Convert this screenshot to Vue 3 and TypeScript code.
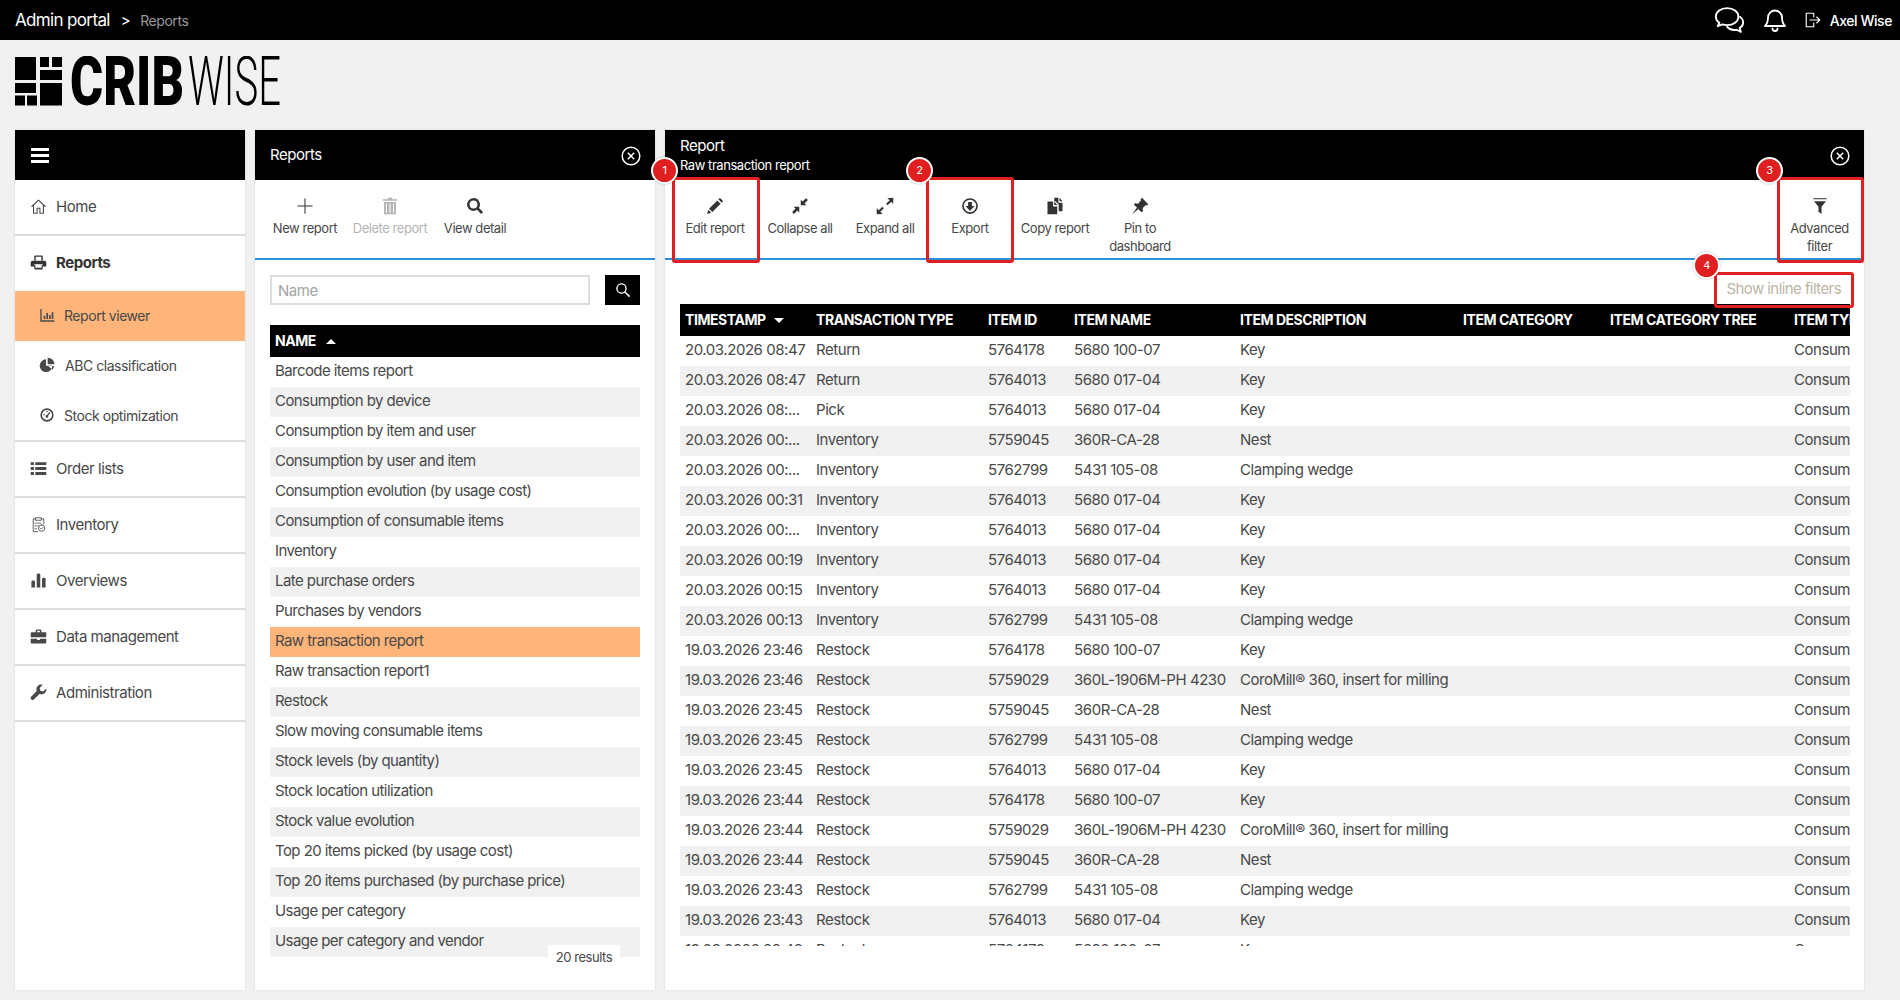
<script lang="ts" setup>
interface Icon { d: string; stroke?: boolean; sw?: number }

const ic: Record<string, Icon> = {
  home: { d: 'M2.5 12 12 3l9.5 9M5 10v11.5h5v-7h4v7h5V10', stroke: true, sw: 1.5 },
  print: { d: 'M6 9V3.5A1.5 1.5 0 0 1 7.5 2h9A1.5 1.5 0 0 1 18 3.5V9h-2V4H8v5zM3.5 9.5h17A2.5 2.5 0 0 1 23 12v5.5h-5V14H6v3.5H1V12a2.5 2.5 0 0 1 2.5-2.5zM7.5 15.5h9v4h-9zM6 15v5.5A1.5 1.5 0 0 0 7.5 22h9a1.5 1.5 0 0 0 1.5-1.5V15z' },
  chart: { d: 'M2 3h2v17h19v2H2zM7 13h2.5v5H7zM11 9h2.5v9H11zM15 12h2.5v6H15zM19 8h2.5v10H19z' },
  pie: { d: 'M10.5 3.5a9.5 9.5 0 1 0 9.5 9.5h-9.5zM13 1a10 10 0 0 1 10 10H13zM14 13.5h8.5a9 9 0 0 1-2.5 5.5z' },
  gauge: { d: 'M12 2a10 10 0 1 0 0 20 10 10 0 0 0 0-20zm0 2.4a7.6 7.6 0 1 1 0 15.2 7.6 7.6 0 0 1 0-15.2zM11 6h2v2h-2zM6.5 10.5h2v2h-2zM15.5 7.5l1.6 1.2-3.4 4.6a2 2 0 1 1-1.7-1.2z' },
  list: { d: 'M1 3h4.5v4H1zM7.5 3H23v4H7.5zM1 10h4.5v4H1zM7.5 10H23v4H7.5zM1 17h4.5v4H1zM7.5 17H23v4H7.5z' },
  clip: { d: 'M8 4H4.5v18H11M16 4h3.5v7M8 2.5h8v3.5H8zM7 10h2M11 10h4M7 14h2M7 18h2M11 14h1M16.5 12.5a4.5 4.5 0 1 0 0 9 4.5 4.5 0 0 0 0-9zM14.5 17l1.5 1.5 2.5-2.5', stroke: true, sw: 1.2 },
  bars: { d: 'M2 14a2 2 0 0 1 2-2h1a2 2 0 0 1 2 2v8H2zM9.5 4a2 2 0 0 1 2-2h1a2 2 0 0 1 2 2v18h-5zM17 10a2 2 0 0 1 2-2h1a2 2 0 0 1 2 2v12h-5z' },
  case: { d: 'M8 6V3.5A1.5 1.5 0 0 1 9.5 2h5A1.5 1.5 0 0 1 16 3.5V6h5.5A1.5 1.5 0 0 1 23 7.5V13H1V7.5A1.5 1.5 0 0 1 2.5 6zM10 4v2h4V4zM1 15h9v2h4v-2h9v5.5a1.5 1.5 0 0 1-1.5 1.5h-19A1.5 1.5 0 0 1 1 20.5z' },
  wrench: { d: 'M23 6.5l-4.4 4.2-4-1-1.1-4L18 1.2a6.5 6.5 0 0 0-8.4 8.6L1.5 18a2.7 2.7 0 0 0 3.8 3.8l8.5-8a6.5 6.5 0 0 0 9.2-7.3z' },
  pencil: { d: 'M15 4.5l4.5 4.5L8.5 20 4 15.5zM3 17l4 4-5.5 1.5zM16.5 3l1-1a1.5 1.5 0 0 1 2 0L22 4.500a1.500 1.500 0 0 1 0 2l-1 1z' },
  compress: { d: 'M13 11V3.5L15.5 6 20 1.5 22.500 4 18 8.500l2.500 2.500zM11 13v7.500L8.500 18 4 22.500 1.500 20 6 15.500 3.500 13z' },
  expand: { d: 'M23 1v8l-2.700-2.700-4.800 4.800-2-2 4.800-4.800L15 1.500zM1 23v-8l2.700 2.700 4.800-4.800 2 2-4.800 4.800L9 22.500z' },
  download: { d: 'M12 1.500a10.500 10.500 0 1 0 0 21 10.500 10.500 0 0 0 0-21zm0 2.200a8.300 8.300 0 1 1 0 16.600 8.300 8.300 0 0 1 0-16.600zM9.500 6.500h5V12h3.500L12 18.500 6 12h3.500z' },
  copy: { d: 'M2 6h7.500v6.500H15V23H2zM11 6l4 4.500h-4zM11 1h5.500v6.500H22V19h-5v-9l-4.500-4.500H11zM18 1l4 4.500h-4z' },
  pin: { d: 'M14.500 1 23 9.500l-1.700 1.700-1.300-.6-4.500 4 .5 4L14 20.300 3.700 10l1.700-1.600 4 .5 4-4.500-.6-1.300zM8 14l2 2-8.500 7z' },
  funnel: { d: 'M3 1.500h18V3H3zM4 5.500h16L14 13v9.500l-4-3V13z' },
  plus: { d: 'M12 2.500v19M2.500 12h19', stroke: true, sw: 1.4 },
  trash: { d: 'M9 1h6v2h6.500v2h-19V3H9zM4 6.500h16V23H4zM6.500 9v12H8V9zM11.250 9v12h1.500V9zM16 9v12h1.500V9z' },
  search: { d: 'M10 1.500a8.500 8.500 0 1 0 4.800 15.500l5.300 5.500 2.600-2.600-5.400-5.400A8.500 8.500 0 0 0 10 1.500zm0 3.300a5.200 5.200 0 1 1 0 10.400 5.200 5.200 0 0 1 0-10.400z' },
  lens: { d: 'M10 3a7 7 0 1 0 4.200 12.600l5.900 5.900 1.400-1.400-5.900-5.900A7 7 0 0 0 10 3zm0 1.800a5.200 5.200 0 1 1 0 10.400 5.200 5.200 0 0 1 0-10.400z' },
  chat: { d: 'M10.500 2.500C5.500 2.500 1.500 5.500 1.500 9.300c0 2 1 3.700 2.800 5l-1.300 2.700 3.800-1.500c1.200.4 2.400.6 3.700.6 5 0 9-3 9-6.800s-4-6.800-9-6.800zM21 9.500c3.500 3 2.700 7-.5 9l1 3-3.500-1.700c-3 .5-6-.5-7.500-2.300', stroke: true, sw: 1.5 },
  bell: { d: 'M12 2.500a7 7 0 0 0-7 7c0 5-1.500 7-3 8.500h20c-1.500-1.500-3-3.500-3-8.500a7 7 0 0 0-7-7zM9.500 20.500a2.500 2.500 0 0 0 5 0', stroke: true, sw: 1.8 },
  logout: { d: 'M13 3H3v18h10v-5M13 8V3M8 12h13M17 8l4 4-4 4', stroke: true, sw: 1.5 },
};

const navTop = [
  { label: 'Home', icon: 'home' },
];
const navSub = [
  { label: 'Report viewer', icon: 'chart', active: true },
  { label: 'ABC classification', icon: 'pie', wide: true },
  { label: 'Stock optimization', icon: 'gauge' },
];
const navBottom = [
  { label: 'Order lists', icon: 'list' },
  { label: 'Inventory', icon: 'clip' },
  { label: 'Overviews', icon: 'bars' },
  { label: 'Data management', icon: 'case' },
  { label: 'Administration', icon: 'wrench' },
];

const reportTools = [
  { label: 'New report', icon: 'plus' },
  { label: 'Delete report', icon: 'trash', off: true },
  { label: 'View detail', icon: 'search' },
];
const viewTools = [
  { label: 'Edit report', icon: 'pencil' },
  { label: 'Collapse all', icon: 'compress' },
  { label: 'Expand all', icon: 'expand' },
  { label: 'Export', icon: 'download' },
  { label: 'Copy report', icon: 'copy' },
  { label: 'Pin to dashboard', icon: 'pin' },
];

const reports = [
  'Barcode items report', 'Consumption by device', 'Consumption by item and user',
  'Consumption by user and item', 'Consumption evolution (by usage cost)',
  'Consumption of consumable items', 'Inventory', 'Late purchase orders',
  'Purchases by vendors', 'Raw transaction report', 'Raw transaction report1', 'Restock',
  'Slow moving consumable items', 'Stock levels (by quantity)', 'Stock location utilization',
  'Stock value evolution', 'Top 20 items picked (by usage cost)',
  'Top 20 items purchased (by purchase price)', 'Usage per category',
  'Usage per category and vendor',
];

const columns = [
  { name: 'TIMESTAMP', width: 131 },
  { name: 'TRANSACTION TYPE', width: 172 },
  { name: 'ITEM ID', width: 86 },
  { name: 'ITEM NAME', width: 166 },
  { name: 'ITEM DESCRIPTION', width: 223 },
  { name: 'ITEM CATEGORY', width: 147 },
  { name: 'ITEM CATEGORY TREE', width: 184 },
  { name: 'ITEM TYPE', width: 160 },
];

const items: Record<string, [string, string, string]> = {
  a: ['5764178', '5680 100-07', 'Key'],
  b: ['5764013', '5680 017-04', 'Key'],
  c: ['5759045', '360R-CA-28', 'Nest'],
  d: ['5762799', '5431 105-08', 'Clamping wedge'],
  e: ['5759029', '360L-1906M-PH 4230', 'CoroMill® 360, insert for milling'],
};
const rows: [string, string, string][] = [
  ['20.03.2026 08:47', 'Return', 'a'],
  ['20.03.2026 08:47', 'Return', 'b'],
  ['20.03.2026 08:...', 'Pick', 'b'],
  ['20.03.2026 00:...', 'Inventory', 'c'],
  ['20.03.2026 00:...', 'Inventory', 'd'],
  ['20.03.2026 00:31', 'Inventory', 'b'],
  ['20.03.2026 00:...', 'Inventory', 'b'],
  ['20.03.2026 00:19', 'Inventory', 'b'],
  ['20.03.2026 00:15', 'Inventory', 'b'],
  ['20.03.2026 00:13', 'Inventory', 'd'],
  ['19.03.2026 23:46', 'Restock', 'a'],
  ['19.03.2026 23:46', 'Restock', 'e'],
  ['19.03.2026 23:45', 'Restock', 'c'],
  ['19.03.2026 23:45', 'Restock', 'd'],
  ['19.03.2026 23:45', 'Restock', 'b'],
  ['19.03.2026 23:44', 'Restock', 'a'],
  ['19.03.2026 23:44', 'Restock', 'e'],
  ['19.03.2026 23:44', 'Restock', 'c'],
  ['19.03.2026 23:43', 'Restock', 'd'],
  ['19.03.2026 23:43', 'Restock', 'b'],
  ['19.03.2026 23:43', 'Restock', 'a'],
];
</script>

<template>
  <div class="page">
    <header class="topbar">
      <div class="crumbs">
        <span class="crumb-main">Admin portal</span>
        <span class="crumb-sep">&gt;</span>
        <span class="crumb-sub">Reports</span>
      </div>
      <div class="user">
        <svg class="ic chat" viewBox="0 0 24 24"><path class="line" :style="{ strokeWidth: ic.chat.sw }" :d="ic.chat.d" /></svg>
        <svg class="ic bell" viewBox="0 0 24 24"><path class="line" :style="{ strokeWidth: ic.bell.sw }" :d="ic.bell.d" /></svg>
        <svg class="ic logout" viewBox="0 0 24 24"><path class="line" :style="{ strokeWidth: ic.logout.sw }" :d="ic.logout.d" /></svg>
        <span class="user-name">Axel Wise</span>
      </div>
    </header>

    <div class="brand">
      <svg class="logo" viewBox="0 0 270 50" width="270" height="50">
        <g fill="#000">
          <rect x="0" y="1" width="21" height="23" />
          <rect x="25" y="1" width="9" height="10" />
          <rect x="37" y="1" width="10" height="10" />
          <rect x="25" y="14" width="22" height="10" />
          <rect x="0" y="27" width="21" height="10" />
          <rect x="0" y="39.5" width="10" height="10" />
          <rect x="12" y="39.5" width="10" height="10" />
          <rect x="25" y="27" width="22" height="22.5" />
        </g>
        <text class="logo-a" x="55" y="49" textLength="114" lengthAdjust="spacingAndGlyphs">CRIB</text>
        <text class="logo-b" x="173" y="49" textLength="93" lengthAdjust="spacingAndGlyphs">WISE</text>
      </svg>
    </div>

    <main class="panels">
      <nav class="panel sidebar">
        <div class="side-head">
          <span class="burger"><i /><i /><i /></span>
        </div>
        <a v-for="n in navTop" :key="n.label" class="nav-row">
          <svg class="ic nav-ic" viewBox="0 0 24 24"><path :class="{ line: ic[n.icon].stroke }" :style="{ strokeWidth: ic[n.icon].sw }" :d="ic[n.icon].d" /></svg>
          {{ n.label }}
        </a>
        <a class="nav-row nav-open">
          <svg class="ic nav-ic" viewBox="0 0 24 24"><path :d="ic.print.d" /></svg>
          Reports
        </a>
        <a v-for="n in navSub" :key="n.label" class="nav-sub" :class="{ active: n.active, wide: n.wide }">
          <svg class="ic sub-ic" viewBox="0 0 24 24"><path :d="ic[n.icon].d" /></svg>
          {{ n.label }}
        </a>
        <div class="nav-rule" />
        <a v-for="n in navBottom" :key="n.label" class="nav-row">
          <svg class="ic nav-ic" viewBox="0 0 24 24"><path :class="{ line: ic[n.icon].stroke }" :style="{ strokeWidth: ic[n.icon].sw }" :d="ic[n.icon].d" /></svg>
          {{ n.label }}
        </a>
      </nav>

      <section class="panel">
        <div class="panel-head">
          <span class="panel-title">Reports</span>
          <svg class="close" viewBox="0 0 20 20"><circle cx="10" cy="10" r="8.8" /><path d="M6.8 6.8l6.4 6.4M13.2 6.8l-6.4 6.4" /></svg>
        </div>
        <div class="toolbar">
          <button v-for="t in reportTools" :key="t.label" class="tool" :class="{ off: t.off }">
            <svg class="ic tool-ic" viewBox="0 0 24 24"><path :class="{ line: ic[t.icon].stroke }" :style="{ strokeWidth: ic[t.icon].sw }" :d="ic[t.icon].d" /></svg>
            <span>{{ t.label }}</span>
          </button>
        </div>
        <div class="list-body">
          <div class="search">
            <input class="search-input" placeholder="Name" />
            <button class="search-btn">
              <svg class="ic lens" viewBox="0 0 24 24"><path :d="ic.lens.d" /></svg>
            </button>
          </div>
          <div class="name-head">NAME <span class="tri-up" /></div>
          <div class="list">
            <div v-for="(r, i) in reports" :key="r" class="list-row" :class="{ striped: i % 2 === 1, selected: r === 'Raw transaction report' }">{{ r }}</div>
            <div class="results">20 results</div>
          </div>
        </div>
      </section>

      <section class="panel report">
        <div class="panel-head">
          <div class="titles">
            <div class="panel-title">Report</div>
            <div class="panel-sub">Raw transaction report</div>
          </div>
          <svg class="close" viewBox="0 0 20 20"><circle cx="10" cy="10" r="8.8" /><path d="M6.8 6.8l6.4 6.4M13.2 6.8l-6.4 6.4" /></svg>
        </div>
        <div class="toolbar">
          <button v-for="t in viewTools" :key="t.label" class="tool">
            <svg class="ic tool-ic" viewBox="0 0 24 24"><path :d="ic[t.icon].d" /></svg>
            <span>{{ t.label }}</span>
          </button>
          <button class="tool tool-end">
            <svg class="ic tool-ic" viewBox="0 0 24 24"><path :d="ic.funnel.d" /></svg>
            <span>Advanced filter</span>
          </button>
        </div>
        <div class="report-body">
          <div class="inline-row"><span class="inline-link">Show inline filters</span></div>
          <div class="table-wrap">
            <table class="grid">
              <colgroup>
                <col v-for="c in columns" :key="c.name" :style="{ width: c.width + 'px' }" />
              </colgroup>
              <thead>
                <tr>
                  <th v-for="(c, i) in columns" :key="c.name">{{ c.name }}<span v-if="i === 0" class="tri-down" /></th>
                </tr>
              </thead>
              <tbody>
                <tr v-for="(r, i) in rows" :key="i" :class="{ striped: i % 2 === 1 }">
                  <td>{{ r[0] }}</td>
                  <td>{{ r[1] }}</td>
                  <td>{{ items[r[2]][0] }}</td>
                  <td>{{ items[r[2]][1] }}</td>
                  <td>{{ items[r[2]][2] }}</td>
                  <td></td>
                  <td></td>
                  <td>Consumable</td>
                </tr>
              </tbody>
            </table>
          </div>
        </div>

        <span class="mark mark-edit" />
        <span class="mark mark-export" />
        <span class="mark mark-filter" />
        <span class="mark mark-inline" />
        <span class="badge badge-1">1</span>
        <span class="badge badge-2">2</span>
        <span class="badge badge-3">3</span>
        <span class="badge badge-4">4</span>
      </section>
    </main>
  </div>
</template>

<style>
html, body {
  margin: 0;
  background: #f1f1f1;
  overflow: hidden;
}
</style>

<style scoped>
.page {
  width: 1900px;
  height: 1000px;
  display: flex;
  flex-direction: column;
  font-family: Inter, "Liberation Sans", sans-serif;
  letter-spacing: -0.45px;
  color: #484848;
}

.ic { display: block; fill: currentColor; fill-rule: evenodd; flex: none; }
.ic .line { fill: none; stroke: currentColor; stroke-linecap: round; stroke-linejoin: round; }

/* top bar */
.topbar {
  height: 40px;
  flex: none;
  background: #000;
  color: #fff;
  display: flex;
  align-items: center;
  justify-content: space-between;
  padding: 0 8px 0 15px;
}
.crumbs { display: flex; align-items: center; }
.crumb-main { font-size: 17px; letter-spacing: -0.65px; }
.crumb-sep { font-size: 15px; margin: 0 10px 0 11px; }
.crumb-sub { font-size: 14px; color: #9a9a9a; }
.user { display: flex; align-items: center; }
.chat { width: 30px; height: 30px; margin-right: 20px; }
.bell { width: 24px; height: 24px; margin-right: 17px; margin-left: -1px; }
.logout { width: 18px; height: 18px; margin-right: 8px; }
.user-name { font-size: 14px; font-weight: 500; }

/* logo */
.brand { height: 90px; flex: none; padding: 16px 0 0 15px; box-sizing: border-box; }
.logo { display: block; }
.logo-a { font-family: Roboto, sans-serif; font-size: 68px; font-weight: 900; letter-spacing: 0; }
.logo-b { font-family: Roboto, sans-serif; font-size: 68px; font-weight: 300; letter-spacing: 0; }

/* panels */
.panels {
  flex: 1;
  display: flex;
  gap: 10px;
  padding: 0 36px 10px 15px;
  min-height: 0;
}
.panel {
  width: 400px;
  flex: none;
  background: #fff;
  box-shadow: 0 0 2px rgba(0, 0, 0, .12);
  display: flex;
  flex-direction: column;
}
.panel-head {
  height: 50px;
  flex: none;
  box-sizing: border-box;
  background: #000;
  color: #fff;
  display: flex;
  align-items: center;
  justify-content: space-between;
  padding: 0 14px 2px 15px;
}
.panel-title { font-size: 15px; }
.panel-sub { font-size: 13px; margin-top: 2px; }
.close { width: 20px; height: 20px; fill: none; stroke: #fff; stroke-width: 1.5; margin-top: 3px; }

/* sidebar */
.sidebar { width: 230px; }
.side-head { height: 50px; background: #000; display: flex; align-items: center; padding-left: 16px; }
.burger { display: flex; flex-direction: column; gap: 3px; }
.burger i { display: block; width: 18px; height: 3px; background: #fff; }
.nav-row {
  height: 56px;
  box-sizing: border-box;
  display: flex;
  align-items: center;
  padding: 0 0 2px 15px;
  font-size: 15px;
  border-bottom: 2px solid #ddd;
}
.nav-open { height: 55px; border-bottom: 0; font-weight: 700; color: #333; }
.nav-ic { width: 17px; height: 17px; margin-right: 9px; }
.nav-sub {
  height: 50px;
  box-sizing: border-box;
  display: flex;
  align-items: center;
  padding: 0 0 2px 24px;
  font-size: 14px;
}
.nav-sub.active { background: #ffb57a; }
.nav-rule { height: 0; border-bottom: 2px solid #ddd; margin-top: -1px; }
.sub-ic { width: 16px; height: 16px; margin-right: 9px; }
.nav-sub.wide .sub-ic { margin-right: 10px; }

/* toolbar */
.toolbar {
  height: 78px;
  flex: none;
  display: flex;
  padding-left: 7.5px;
  padding-right: 2px;
  border-bottom: 2px solid #2b8fd8;
}
.tool {
  width: 85px;
  padding: 17px 2px 0;
  border: 0;
  background: none;
  color: #484848;
  font: inherit;
  letter-spacing: inherit;
  font-size: 13px;
  line-height: 18px;
  display: flex;
  flex-direction: column;
  align-items: center;
  text-align: center;
}
.tool.off { color: #b5b5b5; }
.tool-end { margin-left: auto; }
.tool-ic { width: 18px; height: 18px; margin: 0 0 4px; color: #333; }
.tool.off .tool-ic { color: #b5b5b5; }

/* report list */
.list-body { padding: 15px 15px 0; display: flex; flex-direction: column; }
.search { display: flex; gap: 15px; }
.search-input {
  width: 320px;
  height: 30px;
  box-sizing: border-box;
  border: 2px solid #ddd;
  outline: 0;
  padding: 0 6px;
  font: inherit;
  letter-spacing: inherit;
  font-size: 15px;
}
.search-input::placeholder { color: #a5a5a5; opacity: 1; }
.search-btn {
  width: 35px;
  height: 30px;
  padding: 0;
  border: 0;
  background: #000;
  color: #fff;
  display: flex;
  align-items: center;
  justify-content: center;
}
.lens { width: 18px; height: 18px; }
.name-head {
  margin-top: 20px;
  height: 32px;
  background: #000;
  color: #fff;
  font-size: 14px;
  font-weight: 700;
  line-height: 32px;
  padding-left: 5px;
  display: flex;
  align-items: center;
}
.tri-up {
  width: 0;
  height: 0;
  margin-left: 10px;
  border: 5px solid transparent;
  border-top: 0;
  border-bottom: 5px solid #fff;
}
.list { position: relative; }
.list-row {
  height: 30px;
  line-height: 28px;
  padding-left: 5px;
  font-size: 15px;
  letter-spacing: -0.57px;
}
.striped { background: #f1f1f1; }
.selected { background: #ffb57a; }
.results {
  position: absolute;
  right: 20px;
  top: 588px;
  width: 72px;
  height: 24px;
  line-height: 24px;
  text-align: center;
  font-size: 13px;
  background: #fff;
}

/* report table */
.report { width: 1199px; position: relative; }
.titles { display: flex; flex-direction: column; }
.report-body { padding: 0 14px 0 15px; }
.inline-row { height: 44px; display: flex; justify-content: flex-end; align-items: flex-end; padding-right: 9px; }
.inline-link { font-size: 15px; color: #bdb5a5; line-height: 18px; margin-bottom: 6px; letter-spacing: -0.57px; }
.table-wrap { height: 642px; overflow: hidden; }
.grid { border-collapse: collapse; table-layout: fixed; width: 1269px; }
.grid thead tr { height: 32px; }
.grid tbody tr { height: 30px; }
.grid th {
  padding: 0 0 2px 5px;
  background: #000;
  color: #fff;
  font-size: 14px;
  font-weight: 700;
  text-align: left;
  white-space: nowrap;
  overflow: hidden;
}
.grid td {
  padding: 0 0 2px 5px;
  font-size: 15px;
  line-height: 18px;
  white-space: nowrap;
  overflow: hidden;
}
.tri-down {
  display: inline-block;
  width: 0;
  height: 0;
  margin-left: 8px;
  vertical-align: 2px;
  border: 5px solid transparent;
  border-bottom: 0;
  border-top: 5px solid #fff;
}

/* tutorial marks */
.mark {
  position: absolute;
  box-sizing: border-box;
  border: 3px solid #e02020;
  border-radius: 3px;
}
.mark-edit { left: 7px; top: 47px; width: 88px; height: 86px; }
.mark-export { left: 261px; top: 47px; width: 88px; height: 86px; }
.mark-filter { left: 1112px; top: 47px; width: 87px; height: 86px; }
.mark-inline { left: 1049px; top: 142px; width: 140px; height: 36px; }
.badge {
  position: absolute;
  box-sizing: border-box;
  width: 27px;
  height: 27px;
  border: 2px solid #fff;
  border-radius: 50%;
  background: #e02020;
  color: #fff;
  font-size: 11px;
  line-height: 23px;
  text-align: center;
  box-shadow: 0 0 2px rgba(0, 0, 0, .3);
}
.badge-1 { left: -14px; top: 27px; }
.badge-2 { left: 241px; top: 27px; }
.badge-3 { left: 1091px; top: 27px; }
.badge-4 { left: 1028px; top: 122px; }
</style>
